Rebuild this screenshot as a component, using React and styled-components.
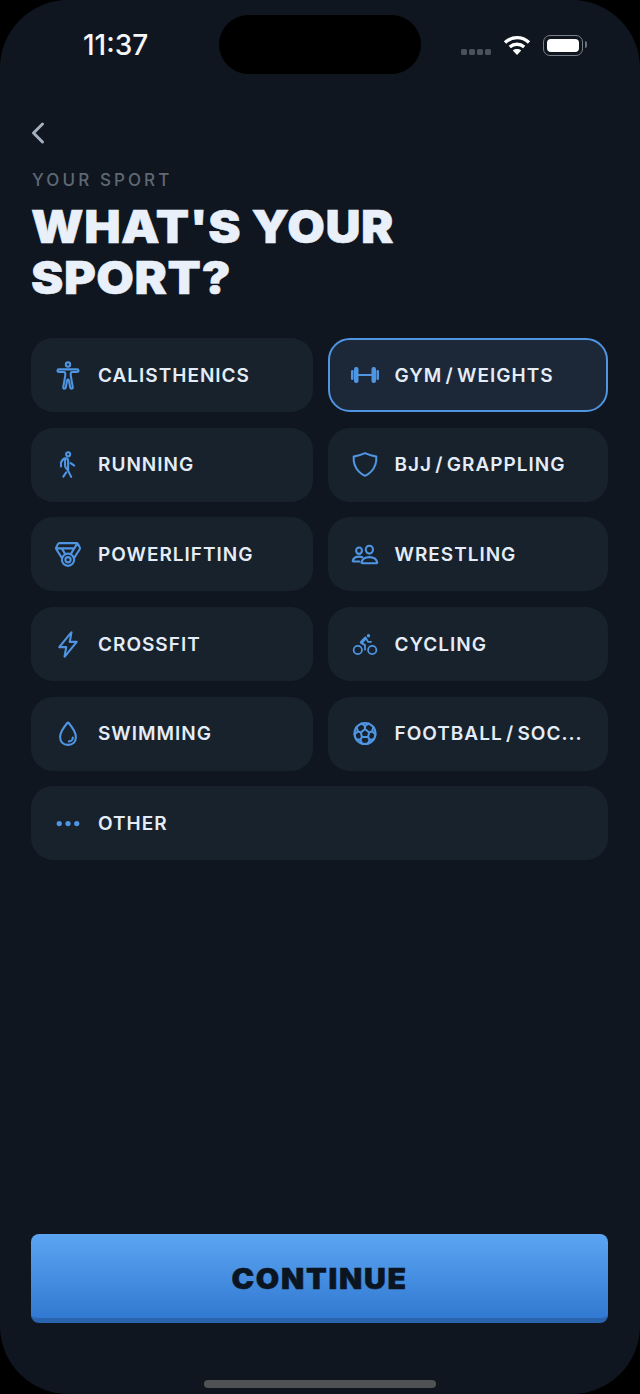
import React from "react";
import styled, { createGlobalStyle } from "styled-components";
import {
  IoBodyOutline,
  IoWalkOutline,
  IoMedalOutline,
  IoShieldOutline,
  IoPeopleOutline,
  IoFlashOutline,
  IoBicycle,
  IoWaterOutline,
  IoFootballOutline,
  IoEllipsisHorizontal,
  IoChevronBack,
} from "react-icons/io5";

const GlobalStyle = createGlobalStyle`
  html, body {
    margin: 0;
    background: #000;
  }
  * { box-sizing: border-box; }
`;

const Phone = styled.div`
  width: 640px;
  height: 1394px;
  background: #0f1620;
  border-radius: 68px;
  display: flex;
  flex-direction: column;
  overflow: hidden;
  font-family: Inter, "Liberation Sans", sans-serif;
`;

const StatusBar = styled.div`
  height: 74px;
  padding-top: 15px;
  display: flex;
  align-items: flex-start;
`;

const Clock = styled.div`
  width: 219px;
  padding: 14px 0 0 83px;
  color: #f4f6f8;
  font-size: 28px;
  font-weight: 500;
  line-height: 32px;
`;

const Island = styled.div`
  width: 202px;
  height: 59px;
  background: #000;
  border-radius: 30px;
`;

const StatusRight = styled.div`
  flex: 1;
  display: flex;
  align-items: center;
  padding: 15px 0 0 40px;
  height: 45px;
`;

const SignalDots = styled.div`
  display: flex;
  gap: 2.5px;
  margin-top: 14px;
  margin-right: 12px;
`;

const SignalDot = styled.span`
  width: 5.5px;
  height: 5.5px;
  border-radius: 1.5px;
  background: #4a515b;
`;

const Battery = styled.div`
  width: 40px;
  height: 21px;
  margin-left: 12px;
  padding: 3px;
  border: 1.5px solid #7a8088;
  border-radius: 7px;
  position: relative;
  &::after {
    content: "";
    position: absolute;
    right: -5px;
    top: 5.5px;
    width: 2px;
    height: 7px;
    background: #6b7178;
    border-radius: 0 2px 2px 0;
  }
`;

const BatteryFill = styled.div`
  height: 100%;
  background: #fff;
  border-radius: 4px;
`;

const Content = styled.div`
  flex: 1;
  display: flex;
  flex-direction: column;
  padding: 0 32px 0 31px;
`;

const BackButton = styled.div`
  height: 32px;
  margin-top: 43px;
  margin-left: -9px;
  display: flex;
  align-items: center;
  color: #a3afbd;
  font-size: 32px;
`;

const Eyebrow = styled.div`
  margin-top: 21px;
  padding-left: 1px;
  color: #5f6873;
  font-size: 17px;
  font-weight: 500;
  line-height: 20px;
  letter-spacing: 3.1px;
`;

const Title = styled.h1`
  margin: 11px 0 0;
  color: #e9f0fa;
  font-size: 45px;
  font-weight: 900;
  line-height: 51px;
  letter-spacing: 0.5px;
  -webkit-text-stroke: 0.5px #e9f0fa;
  transform: scaleX(1.08);
  transform-origin: left center;
`;

const Grid = styled.div`
  margin-top: 35px;
  display: grid;
  grid-template-columns: 281.5px 280.5px;
  grid-auto-rows: 74px;
  gap: 15.7px 15px;
`;

const Card = styled.div`
  grid-column: ${(p) => (p.$wide ? "1 / -1" : "auto")};
  display: flex;
  align-items: center;
  min-width: 0;
  padding: 0 20px 0 21px;
  border-radius: 22px;
  background: ${(p) => (p.$selected ? "#1c2838" : "#18222d")};
  border: 2px solid ${(p) => (p.$selected ? "#4f95e2" : "transparent")};
`;

const IconSlot = styled.div`
  width: 28px;
  height: 28px;
  margin-right: 16px;
  flex-shrink: 0;
  display: flex;
  align-items: center;
  justify-content: center;
  color: #4f95e2;
  font-size: 29px;
  svg [stroke-width] {
    stroke-width: 38px;
  }
`;

const Label = styled.span`
  color: #e4edf7;
  font-size: 19px;
  font-weight: 600;
  letter-spacing: 1px;
  word-spacing: -2.5px;
  white-space: nowrap;
`;

const Spacer = styled.div`
  flex: 1;
`;

const ContinueButton = styled.div`
  height: 89px;
  display: flex;
  align-items: center;
  justify-content: center;
  padding-top: 5px;
  border-radius: 8px;
  background: linear-gradient(180deg, #5ba5f2 0%, #3279d1 100%);
  border-bottom: 5px solid #2a64ae;
`;

const ContinueText = styled.span`
  color: #0b1522;
  font-size: 28px;
  font-weight: 900;
  letter-spacing: 1.6px;
  -webkit-text-stroke: 0.5px #0b1522;
  transform: scaleX(1.08);
`;

const HomeBar = styled.div`
  width: 232px;
  height: 8px;
  margin: 57px auto 6px;
  background: #505152;
  border-radius: 4px;
`;

function BarbellIcon() {
  return (
    <svg width="28" height="16" viewBox="0 0 28 16" fill="currentColor">
      <rect x="0" y="3" width="2.5" height="10" rx="1.2" />
      <rect x="3" y="0" width="4.5" height="16" rx="2" />
      <rect x="7" y="7" width="14" height="2" />
      <rect x="20.5" y="0" width="4.5" height="16" rx="2" />
      <rect x="25.5" y="3" width="2.5" height="10" rx="1.2" />
    </svg>
  );
}

const sports = [
  { name: "CALISTHENICS", icon: <IoBodyOutline /> },
  { name: "GYM / WEIGHTS", icon: <BarbellIcon />, selected: true },
  { name: "RUNNING", icon: <IoWalkOutline /> },
  { name: "BJJ / GRAPPLING", icon: <IoShieldOutline /> },
  { name: "POWERLIFTING", icon: <IoMedalOutline /> },
  { name: "WRESTLING", icon: <IoPeopleOutline /> },
  { name: "CROSSFIT", icon: <IoFlashOutline /> },
  { name: "CYCLING", icon: <IoBicycle /> },
  { name: "SWIMMING", icon: <IoWaterOutline /> },
  { name: "FOOTBALL / SOC...", icon: <IoFootballOutline /> },
  { name: "OTHER", icon: <IoEllipsisHorizontal />, wide: true },
];

function WifiIcon() {
  return (
    <svg width="28" height="22" viewBox="0 0 28 22" fill="none" stroke="#fff" strokeWidth="3.4">
      <path d="M2 8.5C9 2 19 2 26 8.5" />
      <path d="M6.8 13C11 9.3 17 9.3 21.2 13" />
      <path d="M14 21l-4.2-4.6c2.4-1.9 6-1.9 8.4 0z" fill="#fff" stroke="none" />
    </svg>
  );
}

export default function App() {
  return (
    <>
      <GlobalStyle />
      <Phone>
        <StatusBar>
          <Clock>11:37</Clock>
          <Island />
          <StatusRight>
            <SignalDots>
              <SignalDot />
              <SignalDot />
              <SignalDot />
              <SignalDot />
            </SignalDots>
            <WifiIcon />
            <Battery>
              <BatteryFill />
            </Battery>
          </StatusRight>
        </StatusBar>
        <Content>
          <BackButton>
            <IoChevronBack />
          </BackButton>
          <Eyebrow>YOUR SPORT</Eyebrow>
          <Title>
            WHAT'S YOUR
            <br />
            SPORT?
          </Title>
          <Grid>
            {sports.map((s) => (
              <Card key={s.name} $selected={s.selected} $wide={s.wide}>
                <IconSlot>{s.icon}</IconSlot>
                <Label>{s.name}</Label>
              </Card>
            ))}
          </Grid>
          <Spacer />
          <ContinueButton>
            <ContinueText>CONTINUE</ContinueText>
          </ContinueButton>
        </Content>
        <HomeBar />
      </Phone>
    </>
  );
}
